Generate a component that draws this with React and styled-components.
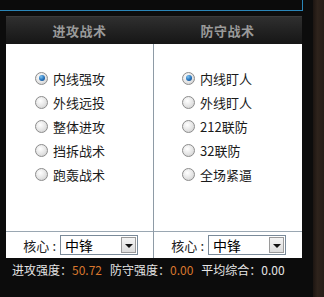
import React from "react";
import styled, { createGlobalStyle } from "styled-components";

const Global = createGlobalStyle`
  html, body { margin: 0; padding: 0; background: #0c0c0c; }
  body { width: 324px; height: 297px; overflow: hidden; font-family: "Noto Sans CJK SC", "Noto Sans", sans-serif; }
`;

const Page = styled.div`
  width: 324px;
  height: 297px;
  display: flex;
  background: #0c0c0c;
`;

const Main = styled.div`
  width: 313px;
  display: flex;
  flex-direction: column;
`;

const Side = styled.div`
  flex: 1;
  background: linear-gradient(90deg, #1c1511 0%, #2e231c 40%, #261d17 100%);
`;

const TopFrame = styled.div`
  width: 302px;
  height: 10px;
  border-bottom: 1px solid #2a86b8;
  border-right: 1px solid #2a86b8;
  background: #0b0b0b;
`;

const Board = styled.div`
  margin: 5px 0 0 6px;
  width: 296px;
  display: flex;
  flex-direction: column;
`;

const Header = styled.div`
  height: 27px;
  display: grid;
  grid-template-columns: 147px 149px;
  background: linear-gradient(180deg, #2f2f2f 0%, #222 50%, #161616 100%);
  border-top: 1px solid #3a3a3a;
`;

const HeaderCell = styled.div`
  display: flex;
  align-items: center;
  justify-content: center;
  color: #9a9a9a;
  font-size: 13px;
  font-weight: bold;
  letter-spacing: 0.5px;
`;

const Panel = styled.div`
  display: grid;
  grid-template-columns: 147px 149px;
  background: #fff;
`;

const Column = styled.div`
  display: flex;
  flex-direction: column;
  border-left: ${(p) => (p.$divider ? "1px solid #8e9ba6" : "none")};
`;

const Options = styled.div`
  height: 165px;
  padding: 22px 0 0 ${(p) => p.$pad}px;
  display: flex;
  flex-direction: column;
`;

const Option = styled.label`
  height: 24px;
  display: flex;
  align-items: center;
  gap: 5px;
  font-size: 13px;
  color: #1a1a1a;
`;

const Radio = styled.span`
  width: 11px;
  height: 11px;
  border-radius: 50%;
  border: 1px solid #8c8c8c;
  background: radial-gradient(circle at 40% 35%, #ffffff 0%, #e4e4e4 55%, #c8c8c8 100%);
  display: flex;
  align-items: center;
  justify-content: center;
  box-sizing: content-box;
  &::after {
    content: "";
    display: ${(p) => (p.$checked ? "block" : "none")};
    width: 6px;
    height: 6px;
    border-radius: 50%;
    background: radial-gradient(circle at 35% 30%, #7fc3ef 0%, #2a78c0 50%, #0d3e78 100%);
  }
`;

const CoreRow = styled.div`
  height: 26px;
  border-top: 1px solid #9aa7b2;
  display: flex;
  align-items: center;
  justify-content: flex-end;
  padding-right: ${(p) => p.$pr}px;
  font-size: 13px;
  color: #222;
`;

const Colon = styled.span`
  margin: 0 4px 0 3px;
`;

const Select = styled.div`
  width: 72px;
  height: 18px;
  border: 1px solid #7a8a99;
  display: flex;
  align-items: center;
  justify-content: space-between;
  padding-left: 4px;
  box-sizing: content-box;
  font-size: 14px;
  color: #000;
  background: #fff;
`;

const Arrow = styled.span`
  width: 15px;
  height: 16px;
  margin-right: 1px;
  border: 1px solid #9a9a9a;
  box-sizing: border-box;
  background: linear-gradient(180deg, #f4f4f4 0%, #dcdcdc 100%);
  display: flex;
  align-items: center;
  justify-content: center;
  &::after {
    content: "";
    border-left: 4px solid transparent;
    border-right: 4px solid transparent;
    border-top: 4px solid #111;
    margin-top: 1px;
  }
`;

const Stats = styled.div`
  margin-top: 3px;
  padding-left: 6px;
  display: flex;
  align-items: center;
  font-size: 12px;
  color: #e6e6e6;
  height: 16px;
`;

const Value = styled.span`
  color: #d9772e;
  margin-right: 8px;
`;

const attack = ["内线强攻", "外线远投", "整体进攻", "挡拆战术", "跑轰战术"];
const defend = ["内线盯人", "外线盯人", "212联防", "32联防", "全场紧逼"];

function Core({ pr }) {
  return (
    <CoreRow $pr={pr}>
      核心<Colon>:</Colon>
      <Select>
        中锋
        <Arrow />
      </Select>
    </CoreRow>
  );
}

export default function App() {
  return (
    <Page>
      <Global />
      <Main>
        <TopFrame />
        <Board>
          <Header>
            <HeaderCell>进攻战术</HeaderCell>
            <HeaderCell>防守战术</HeaderCell>
          </Header>
          <Panel>
            <Column>
              <Options $pad={29}>
                {attack.map((t, i) => (
                  <Option key={t}>
                    <Radio $checked={i === 0} />
                    {t}
                  </Option>
                ))}
              </Options>
              <Core pr={15} />
            </Column>
            <Column $divider>
              <Options $pad={28}>
                {defend.map((t, i) => (
                  <Option key={t}>
                    <Radio $checked={i === 0} />
                    {t}
                  </Option>
                ))}
              </Options>
              <Core pr={16} />
            </Column>
          </Panel>
          <Stats>
            进攻强度：<Value>50.72</Value>
            防守强度：<Value>0.00</Value>
            平均综合：0.00
          </Stats>
        </Board>
      </Main>
      <Side />
    </Page>
  );
}
